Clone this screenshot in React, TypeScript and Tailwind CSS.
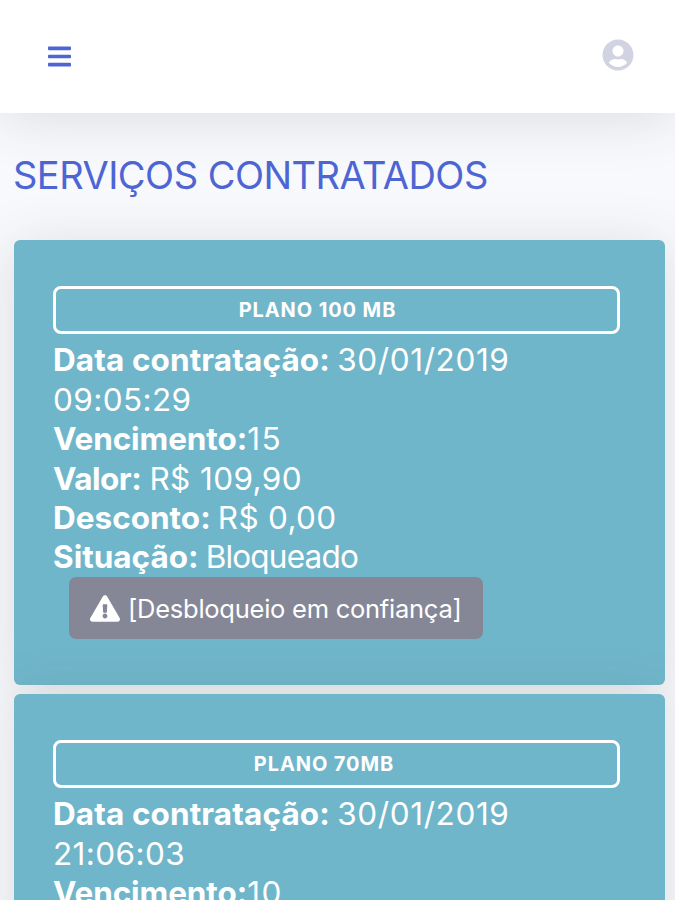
import { FaBars, FaExclamationTriangle, FaUserCircle } from 'react-icons/fa'

type Service = {
  plan: string
  planClass: string
  date: string
  time: string
  dueDay: string
  price: string
  discount: string
  status: string
}

const services: Service[] = [
  {
    plan: 'PLANO 100 MB',
    planClass: 'pr-[38px]',
    date: '30/01/2019',
    time: '09:05:29',
    dueDay: '15',
    price: 'R$ 109,90',
    discount: 'R$ 0,00',
    status: 'Bloqueado',
  },
  {
    plan: 'PLANO 70MB',
    planClass: 'pr-[25px]',
    date: '30/01/2019',
    time: '21:06:03',
    dueDay: '10',
    price: 'R$ 109,90',
    discount: 'R$ 0,00',
    status: 'Bloqueado',
  },
]

const Topbar = () => (
  <header className="relative z-10 flex h-[113px] shrink-0 items-center justify-between bg-white pl-[48px] pr-[41px] shadow-[0_5px_55px_rgba(58,59,69,0.15)]">
    <button aria-label="Menu" className="text-[#4e66d3]">
      <FaBars className="h-[27px] w-[23px]" />
    </button>
    <button aria-label="Perfil" className="pb-[3px] text-[#d1d3e2]">
      <FaUserCircle className="h-8 w-8" />
    </button>
  </header>
)

const ServiceCard = ({ service }: { service: Service }) => (
  <section className="h-[445px] shrink-0 rounded-[6px] bg-[#70b6ca] pl-[39px] pr-[45px] pt-[46px] text-white shadow-[0_5px_55px_rgba(58,59,69,0.15)]">
    <div className={`flex h-[48px] items-center justify-center rounded-[8px] border-[3px] border-white text-[20px] font-bold tracking-[0.9px] ${service.planClass}`}>
      {service.plan}
    </div>
    <div className="mt-[6.4px] text-[31.5px] font-normal leading-[39.4px]">
      <p>
        <b className="font-bold tracking-[0.1px]">Data contratação:</b><span className="-ml-[2px] tracking-[0.6px]"> {service.date}</span>
        <br />
        <span className="tracking-[0.4px]">{service.time}</span>
      </p>
      <p><b className="font-bold tracking-[-0.1px]">Vencimento:</b><span className="tracking-[1.5px]">{service.dueDay}</span></p>
      <p><b className="font-bold tracking-[-0.5px]">Valor:</b><span className="-ml-px tracking-[0.4px]"> {service.price}</span></p>
      <p><b className="font-bold">Desconto:</b><span className="-ml-[2px] tracking-[0.3px]"> {service.discount}</span></p>
      <p><b className="font-bold">Situação:</b><span className="-ml-px tracking-[-0.8px]"> {service.status}</span></p>
    </div>
    <button className="mt-[0.6px] ml-4 flex h-[62px] w-[414px] items-center gap-2 rounded-[7px] bg-[#858796] pl-[21px] text-[25.5px] font-normal tracking-[-0.25px]">
      <FaExclamationTriangle className="h-[27px] w-[30px] shrink-0" />
      <span className="whitespace-nowrap pt-px">[Desbloqueio em confiança]</span>
    </button>
  </section>
)

const App = () => {
  return (
    <div className="flex h-[900px] w-[675px] flex-col overflow-hidden bg-[#f8f9fc] font-['Inter',sans-serif]">
      <Topbar />
      <main className="flex flex-col pl-[13px] pr-[10px] pt-[39px]">
        <h1 className="whitespace-nowrap text-[38px] font-normal leading-[46px] tracking-[-0.52px] text-[#4e66d3]">SERVIÇOS CONTRATADOS</h1>
        <div className="ml-px mt-[42px] flex flex-col gap-[9px]">
          {services.map((service) => (
            <ServiceCard key={service.plan} service={service} />
          ))}
        </div>
      </main>
    </div>
  )
}

export default App
